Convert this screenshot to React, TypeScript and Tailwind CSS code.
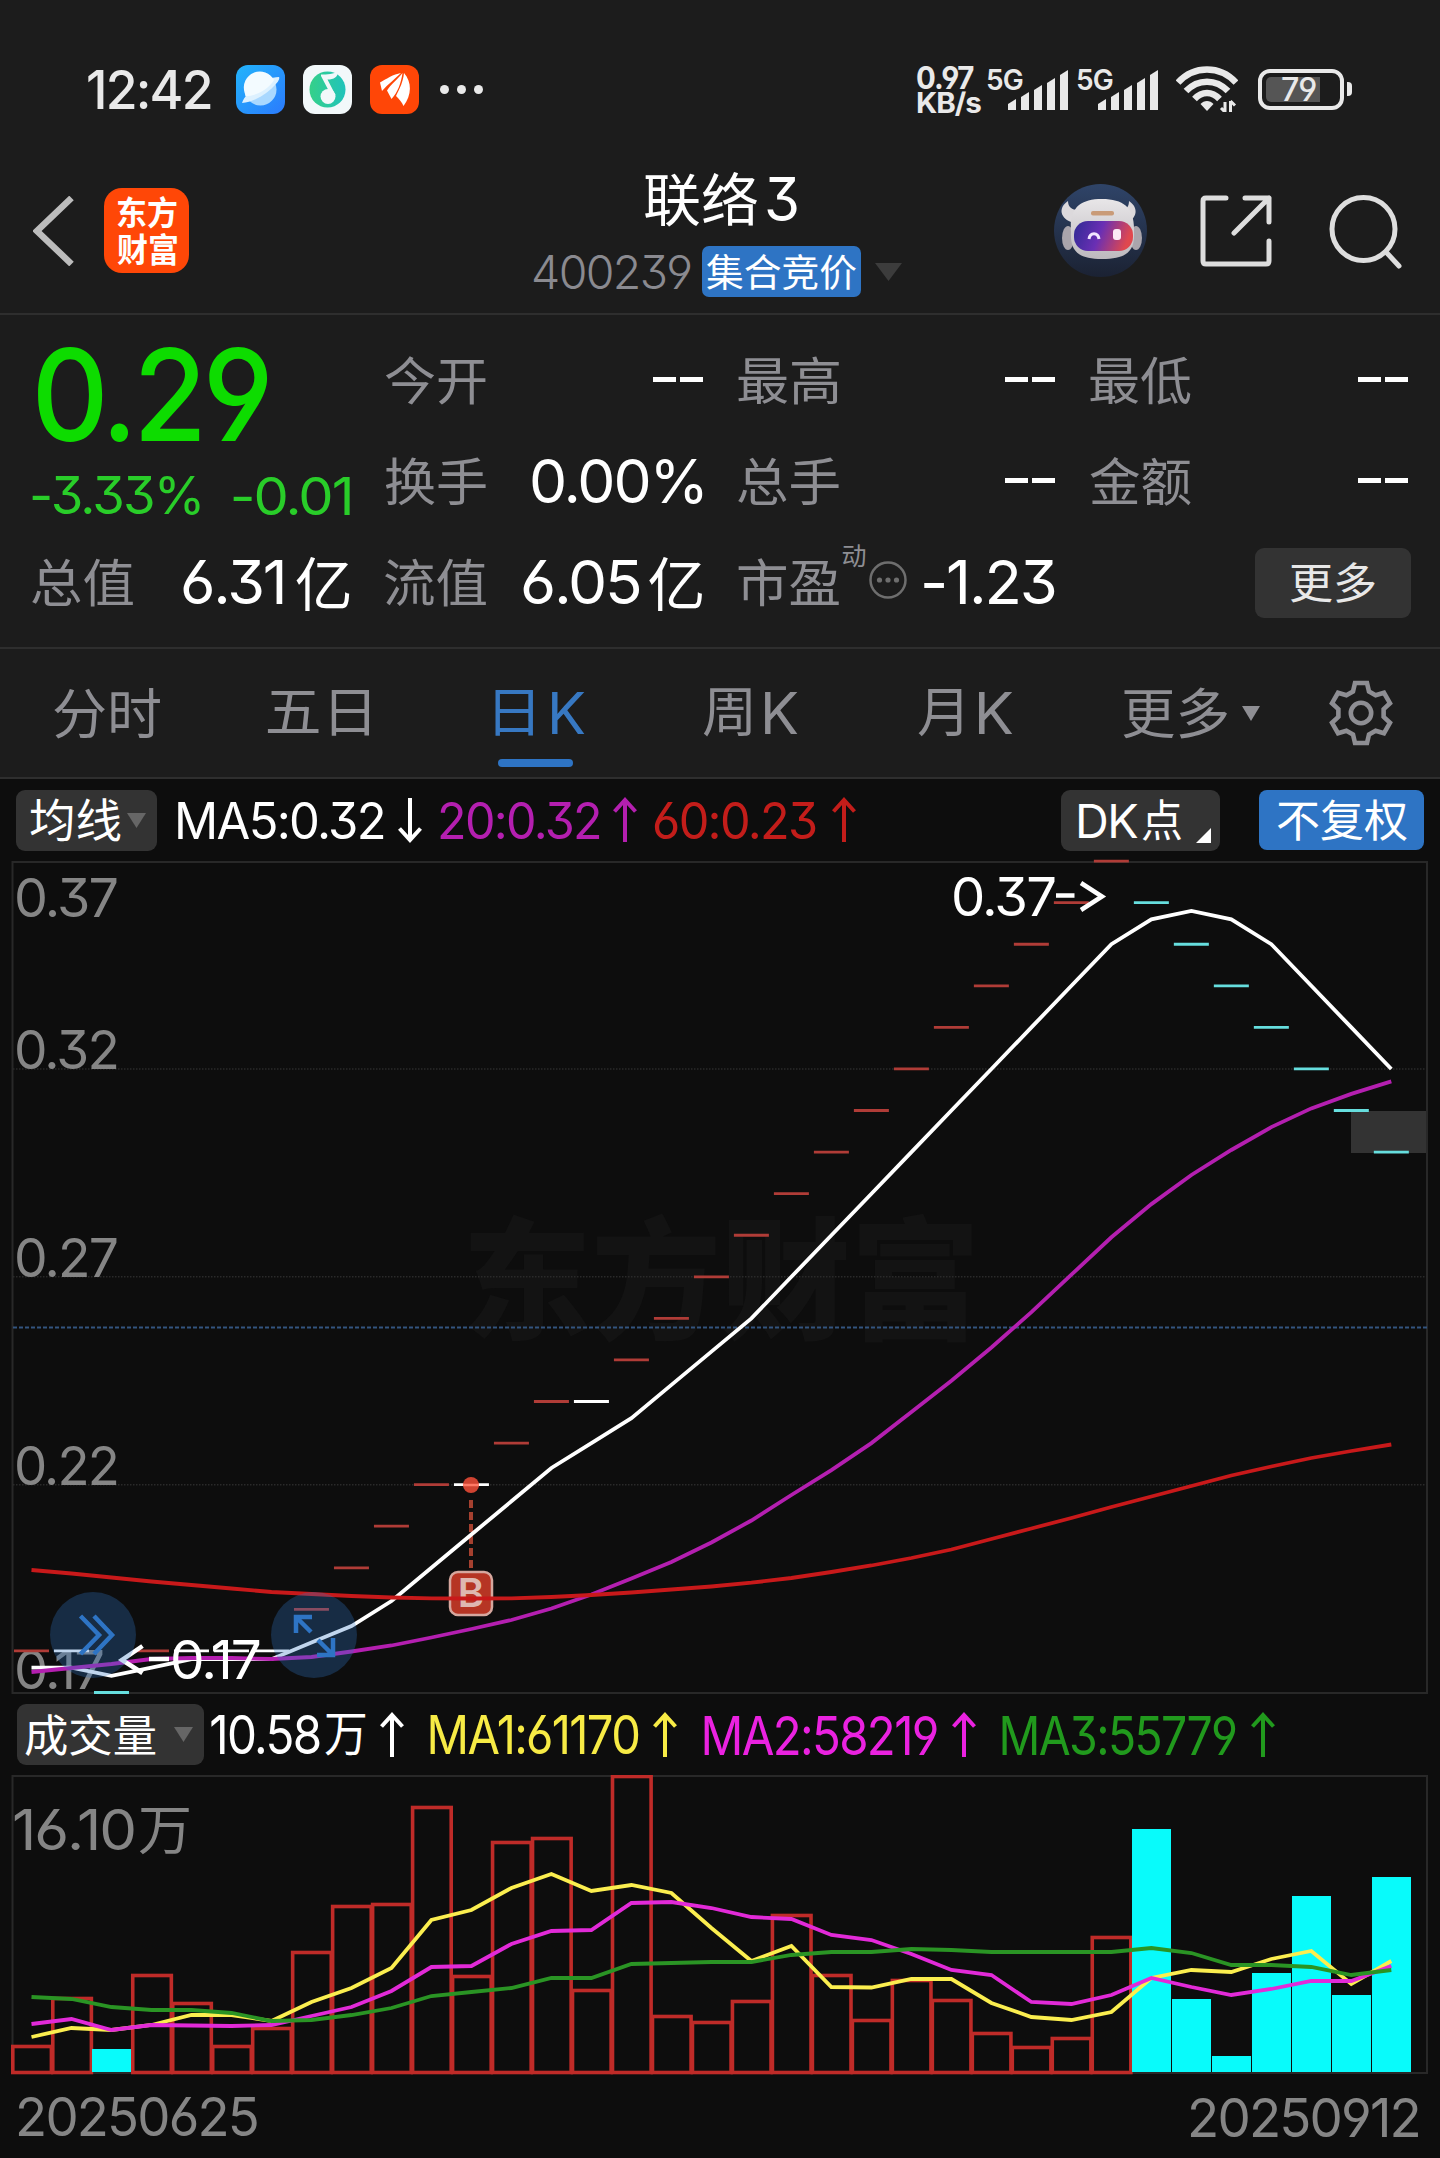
import { useLayoutEffect, useRef, type ReactNode } from "react";

const latin = "font-[Inter,'Noto_Sans_CJK_SC',sans-serif] [font-feature-settings:'cv03','cv04','cv09']";
const han = "font-['Noto_Sans_CJK_SC',sans-serif]";

/* Stretches one run of text so that its ink fills the box and is centred on it vertically. */
function Fit({ children, className = "", cjk = false }: { children: string; className?: string; cjk?: boolean }) {
  const box = useRef<HTMLSpanElement>(null);
  const ink = useRef<HTMLSpanElement>(null);
  useLayoutEffect(() => {
    const b = box.current!;
    const t = ink.current!;
    const cs = getComputedStyle(b);
    const ctx = document.createElement("canvas").getContext("2d")!;
    ctx.font = `${cs.fontWeight} ${cs.fontSize} ${cs.fontFamily}`;
    if (cs.letterSpacing !== "normal") ctx.letterSpacing = cs.letterSpacing;
    const m = ctx.measureText(children);
    const s = b.clientWidth / (m.actualBoundingBoxLeft + m.actualBoundingBoxRight);
    const dy =
      (m.actualBoundingBoxAscent - m.actualBoundingBoxDescent) / 2 -
      (m.fontBoundingBoxAscent - m.fontBoundingBoxDescent) / 2;
    t.style.transform = `translate(${m.actualBoundingBoxLeft * s}px, ${dy}px) scaleX(${s})`;
  }, [children]);
  return (
    <span
      ref={box}
      className={`block shrink-0 leading-none whitespace-nowrap ${cjk ? han : `tracking-[-0.035em] ${latin}`} ${className}`}
    >
      <span ref={ink} className="block w-max origin-left">
        {children}
      </span>
    </span>
  );
}

function Caret({ className = "" }: { className?: string }) {
  return (
    <svg viewBox="0 0 20 16" preserveAspectRatio="none" className={`shrink-0 ${className}`}>
      <path d="M0 0H20L10 16Z" fill="currentColor" />
    </svg>
  );
}

function Arrow({ down = false, className = "" }: { down?: boolean; className?: string }) {
  return (
    <svg viewBox="0 0 24 46" className={`h-[46px] w-6 shrink-0 ${down ? "rotate-180" : ""} ${className}`}>
      <path d="M12 45V3M1.5 14.500L12 3L22.500 14.500" fill="none" stroke="currentColor" strokeWidth="4" />
    </svg>
  );
}

function Signal() {
  return (
    <div className="flex h-12 shrink-0 items-start">
      <Fit className="w-9 text-[29px] font-semibold">5G</Fit>
      <svg viewBox="0 0 60 40" className="mt-[5px] -ml-[15px] h-10 w-[60px]">
        {[29, 22, 15, 8, 0].map((y, i) => (
          <path key={y} d={`M${i * 13} 40V${y + 5}L${i * 13 + 8} ${y}V40Z`} fill="#e9e9e9" />
        ))}
      </svg>
    </div>
  );
}

function StatusBar() {
  return (
    <div className="flex h-32 items-center pt-[50px] pl-[88px] text-[#e9e9e9]">
      <div className="flex h-[78px] w-full items-center">
        <Fit className="w-[123px] text-[53px] font-medium">12:42</Fit>
        <svg viewBox="0 0 49 49" className="ml-[25px] size-[49px] shrink-0">
          <defs>
            <linearGradient id="sky" x1="0" y1="0" x2="1" y2="1">
              <stop offset="0" stopColor="#22b4fb" />
              <stop offset="1" stopColor="#2b7afd" />
            </linearGradient>
          </defs>
          <rect width="49" height="49" rx="12" fill="url(#sky)" />
          <circle cx="24.500" cy="24.500" r="16" fill="#a9d8ff" />
          <path d="M6 38C10 26 30 12 43 12C46 16 24 37 6 38Z" fill="#ddf1ff" />
          <path d="M8.500 27A16 16 0 0 1 38 15C32 25 20 31 9.500 31Z" fill="#f3fbff" />
        </svg>
        <svg viewBox="0 0 49 49" className="ml-[18px] size-[49px] shrink-0">
          <defs>
            <linearGradient id="mint" x1="0" y1="0" x2="1" y2="0">
              <stop offset="0" stopColor="#35d089" />
              <stop offset="1" stopColor="#20c3bb" />
            </linearGradient>
          </defs>
          <rect width="49" height="49" rx="12" fill="#f2f8fa" />
          <circle cx="24.500" cy="24.500" r="18" fill="url(#mint)" />
          <circle cx="25" cy="31.500" r="7.500" fill="#f2f8fa" />
          <path d="M18 9.500C24 9.500 31 9 35 6.500C35 12 31 14.500 24.500 14.500L32.500 30L29 32L18 11Z" fill="#f2f8fa" />
        </svg>
        <svg viewBox="0 0 49 49" className="ml-[18px] size-[49px] shrink-0">
          <rect width="49" height="49" rx="12" fill="#ff4607" />
          <path d="M10 17.500C17 13.500 23 9.500 31 8C25 14 18 19 12 26Z" fill="#fff" />
          <path d="M17 25.500C21 19 27 15 32.500 8C31 18 28 27 21.500 34Z" fill="#fff" />
          <path d="M26 31C30 23 33 17 34 8C42 17 42 30 33.500 41C32 37 29 34 26 31Z" fill="#fff" />
        </svg>
        <div className="ml-[21px] flex gap-[8px]">
          <i className="size-[9px] rounded-full bg-current" />
          <i className="size-[9px] rounded-full bg-current" />
          <i className="size-[9px] rounded-full bg-current" />
        </div>
        <div className="ml-auto w-[65px] shrink-0">
          <Fit className="w-[59px] text-[31px] font-bold">0.97</Fit>
          <Fit className="-mt-[3px] w-[64px] text-[28px] font-bold">KB/s</Fit>
        </div>
        <div className="ml-[5px] flex gap-[9px]">
          <Signal />
          <Signal />
        </div>
        <svg viewBox="0 0 62 46" className="ml-[18px] h-[46px] w-[62px] shrink-0" fill="none" stroke="#e9e9e9" strokeWidth="6.500">
          <path d="M2 16.500C18 -1 44 -1 60 16.500" />
          <path d="M10 25C22 12.500 40 12.500 52 25" />
          <path d="M18.500 33C26 25 36 25 43.500 33" />
          <path d="M31 45L24.500 38C28 34 34 34 37.500 38Z" fill="#e9e9e9" stroke="none" />
          <path d="M49 46V36M54.500 35V46M49 46L45 42M54.500 35L59 39.500" strokeWidth="3" />
        </svg>
        <div className="mr-[88px] ml-[20px] flex shrink-0 items-center gap-[3px]">
          <div className="h-[41px] w-[86px] rounded-[12px] border-[4px] border-[#e9e9e9] p-[4px]">
            <div className="flex h-[25px] w-[54px] items-center rounded-l-[5px] bg-[#555] pl-[16px]">
              <Fit className="w-[35px] text-[32px] font-medium">79</Fit>
            </div>
          </div>
          <i className="h-[14px] w-[5px] rounded-r-[4px] bg-[#e9e9e9]" />
        </div>
      </div>
    </div>
  );
}

function Robot() {
  return (
    <svg viewBox="0 0 93 93" className="size-[93px] shrink-0">
      <defs>
        <linearGradient id="disc" x1="0" y1="0" x2="0" y2="1">
          <stop offset="0" stopColor="#2f4468" />
          <stop offset="1" stopColor="#1b2233" />
        </linearGradient>
        <linearGradient id="visor" x1="0" y1="0" x2="1" y2="0.2">
          <stop offset="0" stopColor="#2f2a94" />
          <stop offset="0.5" stopColor="#6a2fb4" />
          <stop offset="1" stopColor="#e0484e" />
        </linearGradient>
        <linearGradient id="shell" x1="0" y1="0" x2="0" y2="1">
          <stop offset="0" stopColor="#e8e6e8" />
          <stop offset="1" stopColor="#bdb9be" />
        </linearGradient>
      </defs>
      <circle cx="46.500" cy="46.500" r="46.500" fill="url(#disc)" />
      <path d="M14 17C5 23 5 33 17 38L24 26C18 26 14 23 14 17Z" fill="#dcd9dc" />
      <path d="M75 17C84 23 84 33 74 38L67 26C72 26 75 23 75 17Z" fill="#dcd9dc" />
      <ellipse cx="14" cy="54" rx="6" ry="12" fill="#aaa5ac" />
      <ellipse cx="82" cy="54" rx="6" ry="12" fill="#aaa5ac" />
      <path d="M17 48C15 24 26 15 48 15C70 15 81 24 80 48C81 67 73 75 48 75C24 75 16 67 17 48Z" fill="url(#shell)" />
      <rect x="37" y="27" width="23" height="4.500" rx="2" fill="#c99b78" />
      <rect x="20" y="37" width="59" height="30" rx="14" fill="url(#visor)" />
      <path d="M35 55C36 48 44 48 45 55" fill="none" stroke="#f2e6ff" strokeWidth="3" />
      <rect x="59" y="45" width="8" height="11" rx="3" fill="#fbeaf4" />
    </svg>
  );
}

function Header() {
  return (
    <div className="flex h-[187px] items-start border-b-2 border-[#2e2e2e]">
      <div className="flex w-[534px] items-center pt-[60px] pl-[33px]">
        <svg viewBox="0 0 41 70" className="h-[70px] w-[41px]">
          <path d="M38.500 2L4 35L38.500 68" fill="none" stroke="#bcbcbc" strokeWidth="6.500" />
        </svg>
        <div className="ml-[30px] flex size-[85px] flex-col items-center gap-[4px] rounded-[18px] bg-[#ff4707] pt-[8px] text-white">
          <Fit cjk className="w-[60px] text-[33px] font-bold">东方</Fit>
          <Fit cjk className="w-[60px] text-[33px] font-bold">财富</Fit>
        </div>
      </div>
      <div className="w-[368px] pt-[41px]">
        <div className="flex items-center gap-[10px] pl-[111px] text-white">
          <Fit cjk className="w-[112px] text-[57px]">联络</Fit>
          <Fit className="w-[30px] text-[60px]">3</Fit>
        </div>
        <div className="mt-[17px] flex items-center">
          <Fit className="w-[158px] text-[47px] font-light text-[#8a8a90]">400239</Fit>
          <div className="ml-[10px] flex h-[51px] w-[160px] items-center justify-center rounded-[7px] bg-[#2e74c4] text-white">
            <Fit cjk className="w-[149px] text-[38px]">集合竞价</Fit>
          </div>
          <Caret className="ml-[14px] h-[18px] w-[27px] text-[#3c3c3c]" />
        </div>
      </div>
      <div className="flex items-center pt-[56px] pl-[152px]">
        <Robot />
        <svg viewBox="0 0 72 72" className="ml-[53px] size-[72px]" fill="none" stroke="#dedede" strokeWidth="5" strokeLinecap="round" strokeLinejoin="round">
          <path d="M26 3H6Q3 3 3 6V66Q3 69 6 69H66Q69 69 69 66V46M45 3H69V27M69 3L34 38" />
        </svg>
        <svg viewBox="0 0 74 74" className="mt-[2px] ml-[57px] size-[74px]" fill="none" stroke="#dedede" strokeWidth="5" strokeLinecap="round">
          <circle cx="34.500" cy="34" r="31.500" />
          <path d="M57 57L70 71" />
        </svg>
      </div>
    </div>
  );
}

function Label({ children }: { children: string }) {
  return (
    <Fit cjk className="w-[101px] text-[51px] text-[#8e8e93]">
      {children}
    </Fit>
  );
}

function Cell({ label, children }: { label: string; children: ReactNode }) {
  return (
    <div className="flex h-[101px] items-center justify-between">
      <Label>{label}</Label>
      {children}
    </div>
  );
}

function Blank() {
  return (
    <div className="mb-[2px] flex gap-[4px]">
      <i className="h-[5px] w-[23px] bg-white" />
      <i className="h-[5px] w-[23px] bg-white" />
    </div>
  );
}

function Quote() {
  return (
    <div className="h-[334px] border-b-2 border-[#2e2e2e] px-8 pt-[15px] text-white">
      <div className="grid grid-cols-4 gap-x-[35px]">
        <div className="row-span-2">
          <Fit className="ml-[6px] w-[234px] text-[128px] font-medium text-[#0ddc00]">0.29</Fit>
          <div className="mt-[12px] flex justify-between text-[#29cd29]">
            <Fit className="w-[168px] text-[52px]">-3.33%</Fit>
            <Fit className="w-[117px] text-[52px]">-0.01</Fit>
          </div>
        </div>
        <Cell label="今开"><Blank /></Cell>
        <Cell label="最高"><Blank /></Cell>
        <Cell label="最低"><Blank /></Cell>
        <Cell label="换手"><Fit className="w-[171px] text-[61px]">0.00%</Fit></Cell>
        <Cell label="总手"><Blank /></Cell>
        <Cell label="金额"><Blank /></Cell>
        <Cell label="总值">
          <div className="flex items-center gap-[13px]">
            <Fit className="w-[100px] text-[61px]">6.31</Fit>
            <Fit cjk className="w-[54px] text-[58px]">亿</Fit>
          </div>
        </Cell>
        <Cell label="流值">
          <div className="flex items-center gap-[9px]">
            <Fit className="w-[117px] text-[61px]">6.05</Fit>
            <Fit cjk className="w-[54px] text-[58px]">亿</Fit>
          </div>
        </Cell>
        <div className="col-span-2 flex h-[101px] items-center">
          <Label>市盈</Label>
          <Fit cjk className="mb-[52px] ml-[4px] w-[23px] text-[25px] text-[#8e8e93]">动</Fit>
          <svg viewBox="0 0 38 38" className="mb-[5px] ml-[3px] size-[38px] shrink-0 text-[#6e6e6e]" fill="currentColor">
            <circle cx="19" cy="19" r="17.500" fill="none" stroke="currentColor" strokeWidth="2.500" />
            <circle cx="10.500" cy="19" r="2.600" />
            <circle cx="19" cy="19" r="2.600" />
            <circle cx="27.500" cy="19" r="2.600" />
          </svg>
          <Fit className="ml-[17px] w-[131px] text-[61px]">-1.23</Fit>
          <div className="-mr-[3px] ml-auto flex h-[70px] w-[156px] items-center justify-center rounded-[9px] bg-[#333] text-[#e8e8e8]">
            <Fit cjk className="w-[84px] text-[43px]">更多</Fit>
          </div>
        </div>
      </div>
    </div>
  );
}

/* Six teeth, one every 60 degrees, around a ring. */
const gear =
  "M" +
  [0, 60, 120, 180, 240, 300]
    .flatMap((deg) => {
      const a = (deg * Math.PI) / 180;
      return [[-8, -21.5], [-6, -30], [6, -30], [8, -21.5]].map(
        ([x, y]) =>
          `${(33 + x * Math.cos(a) - y * Math.sin(a)).toFixed(2)} ${(33 + x * Math.sin(a) + y * Math.cos(a)).toFixed(2)}`,
      );
    })
    .join("L") +
  "Z";

function Tabs() {
  return (
    <div className="flex h-[130px] items-center border-b-2 border-[#2e2e2e] pl-[54px] text-[#8e8e93]">
      <Fit cjk className="w-[106px] text-[54px]">分时</Fit>
      <Fit cjk className="ml-[108px] w-[101px] text-[54px]">五日</Fit>
      <div className="relative ml-[126px] flex items-center gap-[19px] text-[#3778c2]">
        <Fit cjk className="w-[38px] text-[54px]">日</Fit>
        <Fit className="w-[33px] text-[58px]">K</Fit>
        <i className="absolute top-[75px] left-[3px] h-2 w-[75px] rounded-full bg-[#2e74c4]" />
      </div>
      <div className="ml-[118px] flex items-center gap-[14px]">
        <Fit cjk className="w-[48px] text-[54px]">周</Fit>
        <Fit className="w-[33px] text-[58px]">K</Fit>
      </div>
      <div className="ml-[120px] flex items-center gap-[17px]">
        <Fit cjk className="w-[44px] text-[54px]">月</Fit>
        <Fit className="w-[34px] text-[58px]">K</Fit>
      </div>
      <Fit cjk className="ml-[110px] w-[104px] text-[54px]">更多</Fit>
      <Caret className="ml-[15px] h-[15px] w-[18px]" />
      <svg viewBox="0 0 66 66" className="ml-[68px] size-[66px]" fill="none" stroke="#8e8e93" strokeWidth="4.600">
        <path d={gear} />
        <circle cx="33" cy="33" r="10.200" />
      </svg>
    </div>
  );
}

function AverageBar() {
  return (
    <div className="flex h-[82px] items-center pl-4">
      <div className="flex h-[61px] w-[141px] items-center rounded-[9px] bg-[#333] pl-[14px] text-white">
        <Fit cjk className="w-[91px] text-[46px]">均线</Fit>
        <Caret className="ml-[6px] h-[15px] w-[19px] text-[#666]" />
      </div>
      <Fit className="ml-[21px] w-[205px] text-[50px] text-white">MA5:0.32</Fit>
      <Arrow down className="ml-[15px] text-white" />
      <Fit className="ml-[18px] w-[159px] text-[50px] text-[#b41fb0]">20:0.32</Fit>
      <Arrow className="ml-[14px] text-[#b41fb0]" />
      <Fit className="ml-[17px] w-[163px] text-[50px] text-[#c31d1a]">60:0.23</Fit>
      <Arrow className="ml-[15px] text-[#c31d1a]" />
      <div className="ml-auto flex h-[61px] w-[159px] items-center rounded-[9px] bg-[#333] pl-[18px] text-white">
        <Fit className="w-[59px] text-[47px]">DK</Fit>
        <Fit cjk className="ml-[4px] w-[39px] text-[44px]">点</Fit>
        <svg viewBox="0 0 15 15" className="mt-[30px] ml-[15px] size-[15px]">
          <path d="M15 0V15H0Z" fill="#fff" />
        </svg>
      </div>
      <div className="mr-4 ml-[39px] flex h-[60px] w-[165px] items-center justify-center rounded-[8px] bg-[#2e74c4] text-white">
        <Fit cjk className="w-[130px] text-[44px]">不复权</Fit>
      </div>
    </div>
  );
}

const cx = (i: number) => 31.500 + i * 39.995;
const STEP = 41.57;
const level = (n: number) => 831.5 - n * STEP;

/* Closing price of each day in cents above 0.17. */
const closes = [1, 1, 0, 1, 1, 1, 1, 2, 3, 4, 5, 5, 6, 7, 7, 8, 9, 10, 11, 12, 13, 14, 15, 16, 17, 18, 19, 20, 19, 18, 17, 16, 15, 14, 13];
const tone = (i: number) => {
  if (i === 0) return "#b03c37";
  const d = closes[i] - closes[i - 1];
  if (i === 3) return "#b03c37";
  return d > 0 ? "#b03c37" : d < 0 ? "#66dede" : "#ffffff";
};
const line = (ys: number[]) => ys.map((y, i) => `${cx(i).toFixed(1)},${y.toFixed(1)}`).join(" ");

const ma5 = closes.map((_, i) =>
  level(i < 4 ? [0.6, 0.6, 0.4, 0.6][i] : closes.slice(i - 4, i + 1).reduce((a, b) => a + b, 0) / 5),
);
const ma20Lead = [811, 807, 803, 798, 797, 797, 798, 796, 790.5, 784.5, 776.5, 768, 759, 747.5, 733.5, 717.5, 701, 681.5, 659.5];
const ma20 = closes.map((_, i) =>
  i < 19 ? ma20Lead[i] : level(closes.slice(i - 19, i + 1).reduce((a, b) => a + b, 0) / 20),
);
const ma60 = [709, 712.5, 716.5, 720.5, 724, 727.5, 731, 733, 735, 736.5, 737.3, 737.5, 737.3, 736, 734, 731.5, 728.5, 725.5, 721.7, 717, 711, 704.5, 697, 688.5, 678, 667.5, 657, 646, 635.5, 625, 614.5, 605.5, 597, 590, 583.5];

function ChartText({ x, y, w, fill, children }: { x: number; y: number; w: number; fill: string; children: string }) {
  return (
    <text x={x} y={y} textLength={w} lengthAdjust="spacingAndGlyphs" fill={fill} className={`text-[54px] tracking-[-0.035em] ${latin}`}>
      {children}
    </text>
  );
}

function PriceChart() {
  return (
    <svg viewBox="0 0 1440 834" className="block h-[834px] w-full overflow-visible" fill="none">
      <text x="462" y="468" textLength="518" lengthAdjust="spacingAndGlyphs" fill="#131313" className={`text-[132px] font-black ${han}`}>
        东方财富
      </text>
      <rect x="12.500" y="1" width="1414.500" height="831" stroke="#282828" strokeWidth="2" />
      {[15, 10, 5].map((n) => (
        <path key={n} d={`M13 ${level(n)}H1427`} stroke="#2a2a2a" strokeWidth="1.500" strokeDasharray="1.500 1.500" />
      ))}
      <path d="M13 466.500H1427" stroke="#33547f" strokeWidth="2" strokeDasharray="4 2" />
      <rect x="1351" y="250" width="75" height="42" fill="#333" />
      <ChartText x={14} y={56} w={103} fill="#858585">0.37</ChartText>
      <ChartText x={14} y={208} w={104} fill="#858585">0.32</ChartText>
      <ChartText x={14} y={416} w={103} fill="#858585">0.27</ChartText>
      <ChartText x={14} y={624} w={104} fill="#858585">0.22</ChartText>
      <ChartText x={14} y={828} w={89} fill="#858585">0.17</ChartText>
      {closes.map((n, i) => (
        <path key={i} d={`M${cx(i) - 17.5} ${level(n)}h35`} stroke={tone(i)} strokeWidth="2.800" />
      ))}
      <path d="M471 639V708" stroke="#a5402f" strokeWidth="4" strokeDasharray="8 4" />
      <circle cx="471" cy="624" r="8" fill="#cf4331" />
      <path d="M463 624h16" stroke="#ff7a66" strokeWidth="2.500" />
      <rect x="450" y="711" width="42" height="43" rx="8" fill="#b63524" stroke="#d6a79e" strokeWidth="2.500" />
      <text x="471" y="746" textAnchor="middle" fill="#deb8b1" className="font-[Inter,sans-serif] text-[40px] font-semibold">
        B
      </text>
      <polyline points={line(ma5)} stroke="#fff" strokeWidth="3.800" />
      <polyline points={line(ma20)} stroke="#b41fb0" strokeWidth="3.800" />
      <polyline points={line(ma60)} stroke="#c8191a" strokeWidth="3.800" />
      <ChartText x={951} y={55} w={104} fill="#fff">0.37</ChartText>
      <path d="M1056 34.500h18.500" stroke="#fff" strokeWidth="4.500" />
      <path d="M1081 22L1102 35.500L1081 49" stroke="#fff" strokeWidth="4.500" />
      <path d="M142.500 785L122 799L142.500 812M149 798h20" stroke="#fff" strokeWidth="4.500" />
      <ChartText x={170} y={818} w={90} fill="#fff">0.17</ChartText>
      <g fill="#2e74c4" fillOpacity="0.3">
        <circle cx="93" cy="774" r="43" />
        <circle cx="314" cy="774" r="43" />
      </g>
      <g stroke="#2e74c4" strokeWidth="4.500">
        <path d="M80.500 755L99 774L80.500 793M94 755L112 774L94 793" />
        <path d="M296 772V756H312M296 756L311 771M317 794H333V777M333 794L318 779" />
      </g>
    </svg>
  );
}

function VolumeBar() {
  return (
    <div className="flex h-[80px] items-center pb-[1px] pl-[17px]">
      <div className="flex h-[61px] w-[187px] items-center rounded-[9px] bg-[#333] pl-[8px] text-white">
        <Fit cjk className="w-[131px] text-[44px]">成交量</Fit>
        <Caret className="ml-[18px] h-[15px] w-[19px] text-[#666]" />
      </div>
      <Fit className="ml-[7px] w-[109px] text-[54px] text-white">10.58</Fit>
      <Fit cjk className="ml-[5px] w-[41px] text-[48px] text-white">万</Fit>
      <Arrow className="ml-[14px] text-white" />
      <Fit className="ml-[26px] w-[210px] text-[54px] text-[#f7eb45]">MA1:61170</Fit>
      <Arrow className="ml-[13px] text-[#f7eb45]" />
      <Fit className="ml-[27px] w-[235px] text-[54px] text-[#ea22e0]">MA2:58219</Fit>
      <Arrow className="ml-[13px] text-[#ea22e0]" />
      <Fit className="ml-[26px] w-[235px] text-[54px] text-[#219a1d]">MA3:55779</Fit>
      <Arrow className="ml-[14px] text-[#219a1d]" />
    </div>
  );
}

const BASE = 296;
const barTops = [270, 222, 274, 199, 227, 270, 252, 176, 130, 128, 31, 200, 66, 62, 214, 0, 240, 246, 225, 139, 199, 244, 204, 224, 257, 271, 262, 161, 54, 224, 281, 198, 121, 220, 102];
const falling = (i: number) => i === 2 || i > 27;
const vol1 = [262, 253, 255, 250, 240, 240, 246, 227, 213, 193, 145, 135, 113, 99, 116, 110, 118, 153, 186, 171, 212, 212.5, 204, 204, 228, 242, 245, 237, 203, 195, 197, 184, 176, 209, 186];
const vol2 = [249, 244, 255, 250, 250.5, 251, 250, 241, 232, 216, 192, 191, 169, 156, 155, 128, 127, 133, 142, 144, 160, 165, 179, 195, 200, 227, 229, 220, 203, 212, 220, 214, 206, 206, 191];
const vol3 = [222, 224, 232, 235, 235, 238, 246, 245, 240, 233, 221, 217, 213, 203, 203, 189, 188, 187, 187, 180, 177, 177, 174, 175, 177, 177, 177, 177, 173, 178, 190, 190, 192, 200, 195];

function VolumeChart() {
  return (
    <svg viewBox="0 0 1440 300" className="block h-[300px] w-full" fill="none">
      <rect x="12.500" y="1" width="1414.500" height="297" stroke="#282828" strokeWidth="2" />
      <text x="12" y="75" textLength="123" lengthAdjust="spacingAndGlyphs" fill="#858585" className={`text-[56px] tracking-[-0.035em] ${latin}`}>
        16.10
      </text>
      <text x="138" y="75" textLength="54" lengthAdjust="spacingAndGlyphs" fill="#858585" className={`text-[54px] ${han}`}>
        万
      </text>
      {barTops.map((top, i) =>
        falling(i) ? null : (
          <rect key={i} x={12.800 + i * 39.98} y={top + 1.5} width="38.600" height={BASE - top} stroke="#bf2b28" strokeWidth="3.600" />
        ),
      )}
      {barTops.map((top, i) =>
        falling(i) ? <rect key={i} x={12 + i * 40} y={top} width="39" height={BASE + 1 - top} fill="#08fbfb" /> : null,
      )}
      <polyline points={line(vol1)} stroke="#fbee4f" strokeWidth="3.800" />
      <polyline points={line(vol2)} stroke="#e22ad8" strokeWidth="3.800" />
      <polyline points={line(vol3)} stroke="#2a9424" strokeWidth="3.800" />
    </svg>
  );
}

export default function App() {
  return (
    <div className="h-[2158px] w-[1440px] overflow-hidden bg-[#0d0d0d]">
      <div className="bg-[#1c1c1c]">
        <StatusBar />
        <Header />
        <Quote />
        <Tabs />
      </div>
      <AverageBar />
      <PriceChart />
      <VolumeBar />
      <VolumeChart />
      <div className="flex items-center justify-between pt-[15px] pr-[19px] pl-[19px] text-[#858585]">
        <Fit className="w-[240px] text-[54px]">20250625</Fit>
        <Fit className="w-[230px] text-[54px]">20250912</Fit>
      </div>
    </div>
  );
}
